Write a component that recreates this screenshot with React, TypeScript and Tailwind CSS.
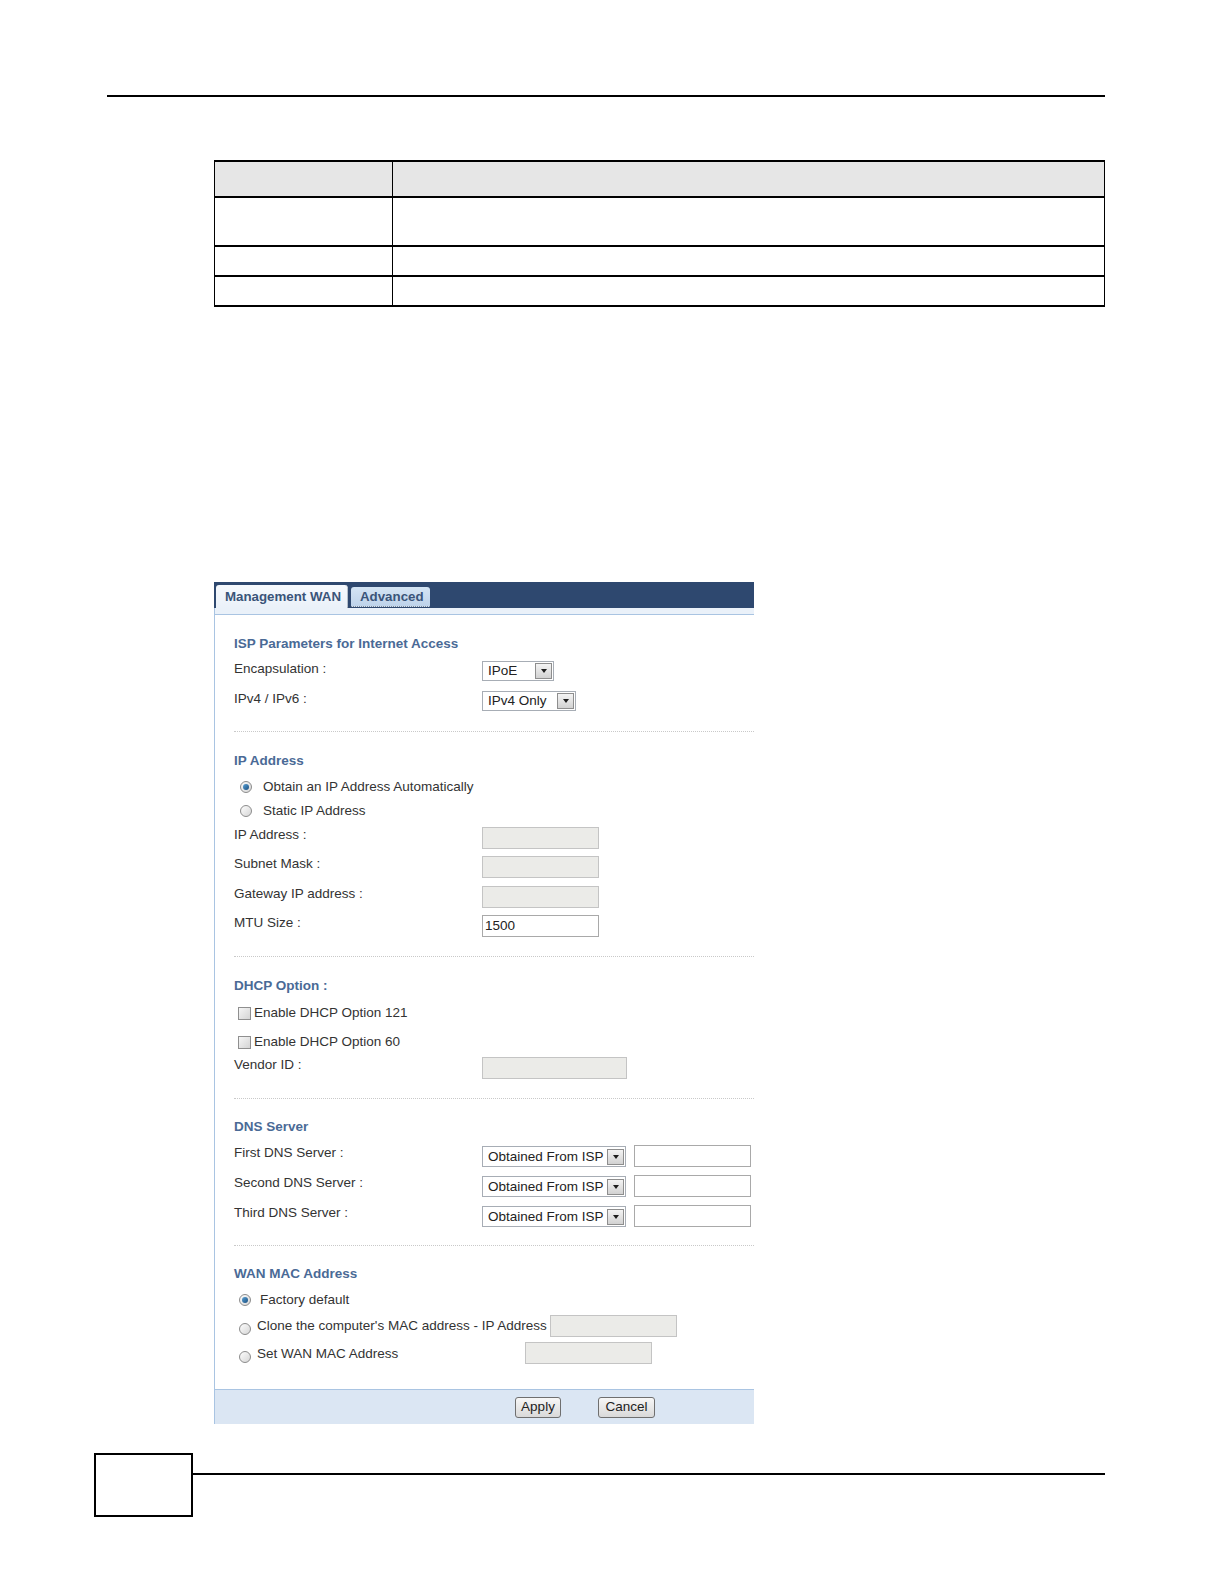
import type { ReactNode } from 'react';

function Select({ value, width, height = 'h-[20px]' }: { value: string; width: string; height?: string }) {
  return (
    <div className={`${width} ${height} flex items-center border border-[#a7adb5] bg-white pl-[5px] pr-[1px]`}>
      <span className="flex-1 text-[13.5px] leading-none text-[#222]">{value}</span>
      <span className="flex h-[16px] w-[17px] items-center justify-center border border-[#8e8e8e] bg-gradient-to-b from-[#f4f4f4] to-[#d2d2d2]">
        <span className="h-0 w-0 border-x-[3.5px] border-t-[4px] border-x-transparent border-t-[#1e1e1e]" />
      </span>
    </div>
  );
}

function Input({ width, value, disabled = false }: { width: string; value?: string; disabled?: boolean }) {
  return (
    <div
      className={`${width} flex h-[22px] items-center border pl-[2px] text-[13.5px] text-[#222] ${
        disabled ? 'border-[#c4c4c4] bg-[#ebebe8]' : 'border-[#a9a9a9] bg-white'
      }`}
    >
      {value}
    </div>
  );
}

function Radio({ checked = false }: { checked?: boolean }) {
  return (
    <span className="flex h-[12px] w-[12px] shrink-0 items-center justify-center rounded-full border border-[#8c8c8c] bg-gradient-to-br from-[#fdfdfd] to-[#d6d6d6]">
      {checked && <span className="h-[6px] w-[6px] rounded-full bg-gradient-to-br from-[#5aa2d6] to-[#1a4f80]" />}
    </span>
  );
}

function Checkbox() {
  return (
    <span className="h-[13px] w-[13px] shrink-0 border border-[#8f8f8f] bg-gradient-to-br from-[#f6f6f6] to-[#d4d4d4]" />
  );
}

function Heading({ mt, children }: { mt: string; children: ReactNode }) {
  return (
    <div className={`${mt} flex h-[18px] items-center text-[13.5px] font-bold text-[#4a6a96]`}>{children}</div>
  );
}

function Field({ mt, label, h = 'h-[22px]', children }: { mt: string; label: string; h?: string; children: ReactNode }) {
  return (
    <div className={`${mt} ${h} flex items-start`}>
      <span className="w-[248px] text-[13.5px] leading-[16px] text-[#333]">{label}</span>
      {children}
    </div>
  );
}

function Separator({ mt }: { mt: string }) {
  return <div className={`${mt} border-t border-dotted border-[#c9c9c9]`} />;
}

function WanPanel() {
  return (
    <div className="ml-[214px] mt-[275px] w-[540px] font-['Liberation_Sans',Arial,sans-serif]">
      {/* tab bar */}
      <div className="flex h-[26px] items-end bg-[#2e486f] pl-[2px]">
        <div className="flex h-[23px] w-[132px] items-center rounded-t-[3px] border-r border-dotted border-r-[#7d8a9a] bg-gradient-to-b from-[#f6f9fd] to-[#eaf1f9] pl-[9px] text-[13.3px] font-bold text-[#3a5479]">
          Management WAN
        </div>
        <div className="mb-[1px] ml-[3px] flex h-[20px] w-[79px] items-center rounded-t-[3px] border-b border-dotted border-b-[#7d8a9a] bg-gradient-to-b from-[#d4e4f4] to-[#bed3ea] pl-[9px] text-[13.3px] font-bold text-[#3a5479]">
          Advanced
        </div>
      </div>

      <div className="border-l border-[#a9c4e2]">
        <div className="h-[7px] border-b border-[#a9c4e2] bg-[#eaf1f9]" />

        <div className="pl-[19px]">
          <Heading mt="mt-[20px]">ISP Parameters for Internet Access</Heading>
          <Field mt="mt-[8px]" h="h-[20px]" label="Encapsulation :">
            <Select value="IPoE" width="w-[72px]" />
          </Field>
          <Field mt="mt-[10px]" h="h-[20px]" label="IPv4 / IPv6 :">
            <Select value="IPv4 Only" width="w-[94px]" />
          </Field>

          <Separator mt="mt-[20px]" />

          <Heading mt="mt-[20px]">IP Address</Heading>
          <div className="mt-[8px] flex h-[18px] items-center pl-[6px] text-[13.5px] text-[#333]">
            <Radio checked />
            <span className="ml-[11px]">Obtain an IP Address Automatically</span>
          </div>
          <div className="mt-[6px] flex h-[18px] items-center pl-[6px] text-[13.5px] text-[#333]">
            <Radio />
            <span className="ml-[11px]">Static IP Address</span>
          </div>
          <Field mt="mt-[7px]" label="IP Address :">
            <Input width="w-[117px]" disabled />
          </Field>
          <Field mt="mt-[7px]" label="Subnet Mask :">
            <Input width="w-[117px]" disabled />
          </Field>
          <Field mt="mt-[8px]" label="Gateway IP address :">
            <Input width="w-[117px]" disabled />
          </Field>
          <Field mt="mt-[7px]" h="h-[23px]" label="MTU Size :">
            <Input width="w-[117px]" value="1500" />
          </Field>

          <Separator mt="mt-[18px]" />

          <Heading mt="mt-[20px]">DHCP Option :</Heading>
          <div className="mt-[9px] flex h-[18px] items-center gap-[3px] pl-[4px] text-[13.5px] text-[#333]">
            <Checkbox />
            <span>Enable DHCP Option 121</span>
          </div>
          <div className="mt-[11px] flex h-[18px] items-center gap-[3px] pl-[4px] text-[13.5px] text-[#333]">
            <Checkbox />
            <span>Enable DHCP Option 60</span>
          </div>
          <Field mt="mt-[6px]" label="Vendor ID :">
            <Input width="w-[145px]" disabled />
          </Field>

          <Separator mt="mt-[19px]" />

          <Heading mt="mt-[19px]">DNS Server</Heading>
          {['First DNS Server :', 'Second DNS Server :', 'Third DNS Server :'].map((label, i) => (
            <Field key={label} mt={i === 0 ? 'mt-[9px]' : 'mt-[8px]'} label={label}>
              <div className="mt-[1px]">
                <Select value="Obtained From ISP" width="w-[144px]" height="h-[21px]" />
              </div>
              <div className="ml-[8px]">
                <Input width="w-[117px]" />
              </div>
            </Field>
          ))}

          <Separator mt="mt-[18px]" />

          <Heading mt="mt-[19px]">WAN MAC Address</Heading>
          <div className="mt-[8px] flex h-[18px] items-center pl-[5px] text-[13.5px] text-[#333]">
            <Radio checked />
            <span className="ml-[9px]">Factory default</span>
          </div>
          <div className="mt-[6px] flex h-[22px] items-center text-[13.5px] text-[#333]">
            <div className="flex w-[316px] items-center">
              <span className="ml-[5px] mt-[5px]">
                <Radio />
              </span>
              <span className="ml-[6px]">Clone the computer's MAC address - IP Address</span>
            </div>
            <Input width="w-[127px]" disabled />
          </div>
          <div className="mt-[5px] flex h-[22px] items-start text-[13.5px] text-[#333]">
            <div className="flex w-[291px] items-center pt-[2px]">
              <span className="ml-[5px] mt-[5px]">
                <Radio />
              </span>
              <span className="ml-[6px]">Set WAN MAC Address</span>
            </div>
            <Input width="w-[127px]" disabled />
          </div>
          <div className="h-[25px]" />
        </div>

        <div className="flex h-[35px] items-start gap-[37px] border-t border-[#a9c4e2] bg-[#dbe6f3] pl-[300px] pt-[7px]">
          <button
            type="button"
            className="flex h-[21px] w-[46px] items-center justify-center rounded-[3px] border border-[#6f6f6f] bg-gradient-to-b from-[#f7f7f7] to-[#d9d9d9] text-[13.5px] text-[#222]"
          >
            Apply
          </button>
          <button
            type="button"
            className="flex h-[21px] w-[57px] items-center justify-center rounded-[3px] border border-[#6f6f6f] bg-gradient-to-b from-[#f7f7f7] to-[#d9d9d9] text-[13.5px] text-[#222]"
          >
            Cancel
          </button>
        </div>
      </div>
    </div>
  );
}

export default function App() {
  return (
    <div className="bg-white pt-[95px] pb-[40px]">
      {/* running header rule */}
      <div className="ml-[107px] h-[2px] w-[998px] bg-black" />

      {/* empty field table */}
      <div className="ml-[214px] mt-[63px] w-[891px] border-r border-l border-black">
        <div className="grid h-[36px] grid-cols-[178px_1fr] border-t-2 border-black bg-[#e6e6e6]">
          <div className="border-r border-black" />
          <div />
        </div>
        <div className="grid h-[49px] grid-cols-[178px_1fr] border-t-2 border-black">
          <div className="border-r border-black" />
          <div />
        </div>
        <div className="grid h-[30px] grid-cols-[178px_1fr] border-t-2 border-black">
          <div className="border-r border-black" />
          <div />
        </div>
        <div className="grid h-[32px] grid-cols-[178px_1fr] border-y-2 border-black">
          <div className="border-r border-black" />
          <div />
        </div>
      </div>

      <WanPanel />

      {/* page footer */}
      <div className="mt-[29px] flex items-start">
        <div className="ml-[94px] h-[64px] w-[99px] border-2 border-black" />
        <div className="mt-[20px] h-[2px] w-[912px] bg-black" />
      </div>
    </div>
  );
}
